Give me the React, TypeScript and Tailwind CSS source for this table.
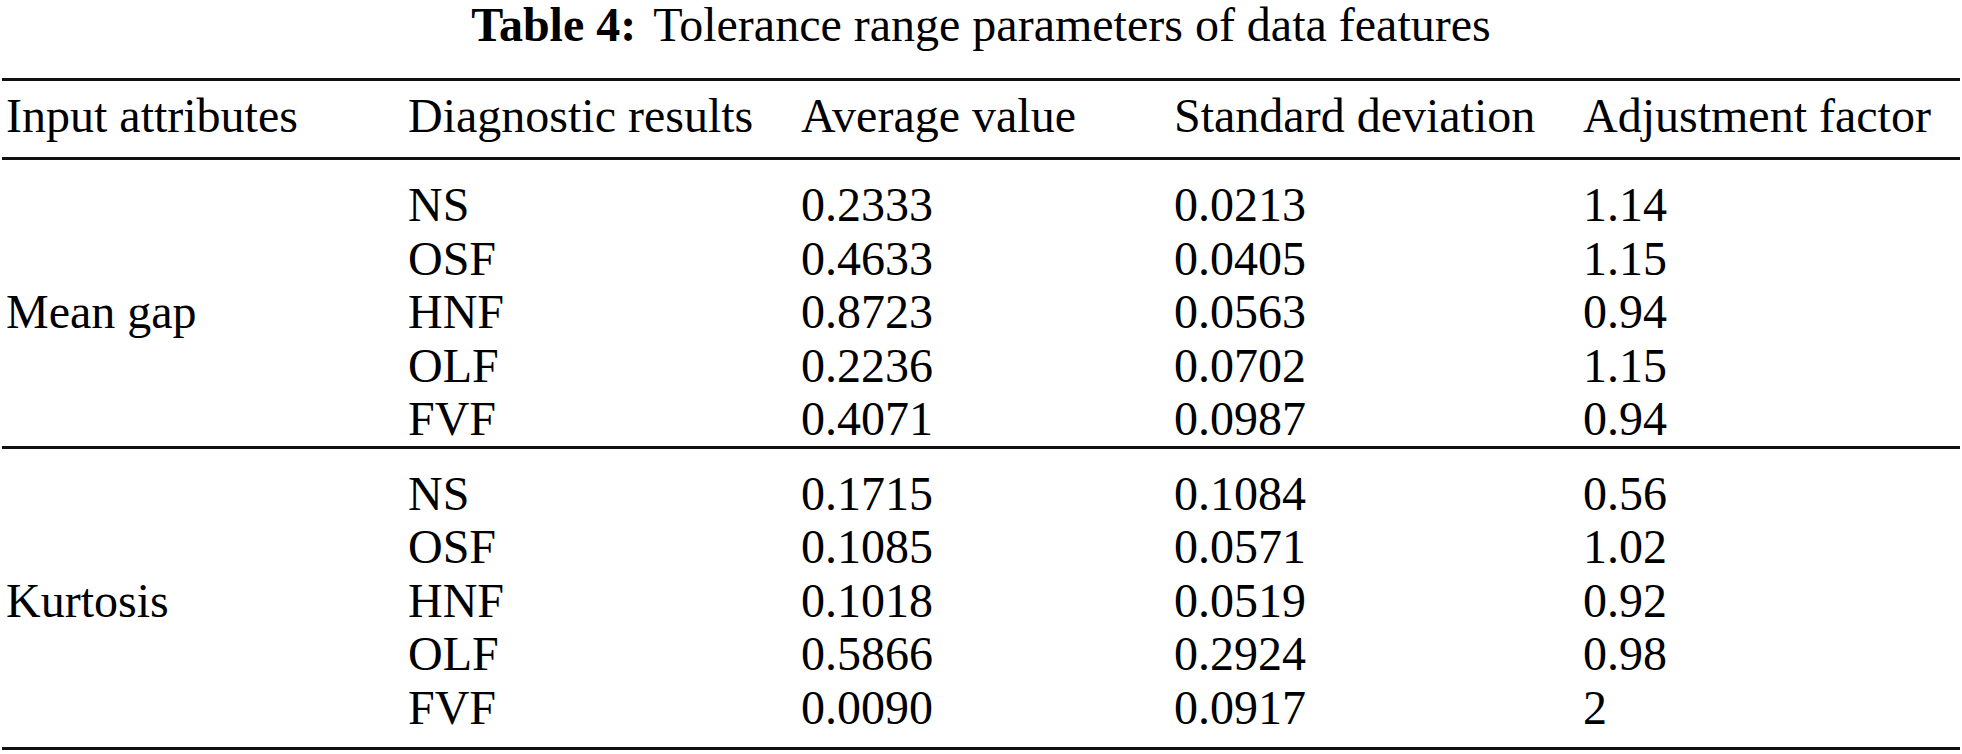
type Row = { result: string; avg: string; std: string; factor: string };

type Group = { attribute: string; rows: Row[] };

const groups: Group[] = [
  {
    attribute: "Mean gap",
    rows: [
      { result: "NS", avg: "0.2333", std: "0.0213", factor: "1.14" },
      { result: "OSF", avg: "0.4633", std: "0.0405", factor: "1.15" },
      { result: "HNF", avg: "0.8723", std: "0.0563", factor: "0.94" },
      { result: "OLF", avg: "0.2236", std: "0.0702", factor: "1.15" },
      { result: "FVF", avg: "0.4071", std: "0.0987", factor: "0.94" },
    ],
  },
  {
    attribute: "Kurtosis",
    rows: [
      { result: "NS", avg: "0.1715", std: "0.1084", factor: "0.56" },
      { result: "OSF", avg: "0.1085", std: "0.0571", factor: "1.02" },
      { result: "HNF", avg: "0.1018", std: "0.0519", factor: "0.92" },
      { result: "OLF", avg: "0.5866", std: "0.2924", factor: "0.98" },
      { result: "FVF", avg: "0.0090", std: "0.0917", factor: "2" },
    ],
  },
];

const serif = { fontFamily: '"Liberation Serif", "Times New Roman", serif' };

export default function App() {
  return (
    <div className="w-[1962px] h-[754px] bg-white text-black px-[2px]" style={serif}>
      <div className="text-center text-[48px] leading-[54px] mb-[26px] -mt-[2px]">
        <span className="font-bold">Table 4:</span>
        <span className="ml-[17px]">Tolerance range parameters of data features</span>
      </div>

      <div className="border-t-[3px] border-b-[3px] border-[#111] pt-[9px] pb-[15px] flex text-[48px] leading-[52px] whitespace-nowrap">
        <div className="w-[402px] pl-[4px]">Input attributes</div>
        <div className="w-[393px] pl-[4px]">Diagnostic results</div>
        <div className="w-[373px] pl-[4px]">Average value</div>
        <div className="w-[409px] pl-[4px]">Standard deviation</div>
        <div className="flex-1 pl-[4px]">Adjustment factor</div>
      </div>

      {groups.map((g, gi) => (
        <div
          key={g.attribute}
          className={
            gi === 0
              ? "flex border-b-[3px] border-[#111] pt-[18px] text-[48px] leading-[53.5px]"
              : "flex border-b-[3px] border-[#111] pt-[18px] pb-[13px] text-[48px] leading-[53.5px]"
          }
        >
          <div className="w-[402px] pl-[4px] flex items-center">{g.attribute}</div>
          <div className="flex-1 flex flex-col">
            {g.rows.map((r, i) => (
              <div key={i} className="flex">
                <div className="w-[393px] pl-[4px]">{r.result}</div>
                <div className="w-[373px] pl-[4px]">{r.avg}</div>
                <div className="w-[409px] pl-[4px]">{r.std}</div>
                <div className="flex-1 pl-[4px]">{r.factor}</div>
              </div>
            ))}
          </div>
        </div>
      ))}
    </div>
  );
}
